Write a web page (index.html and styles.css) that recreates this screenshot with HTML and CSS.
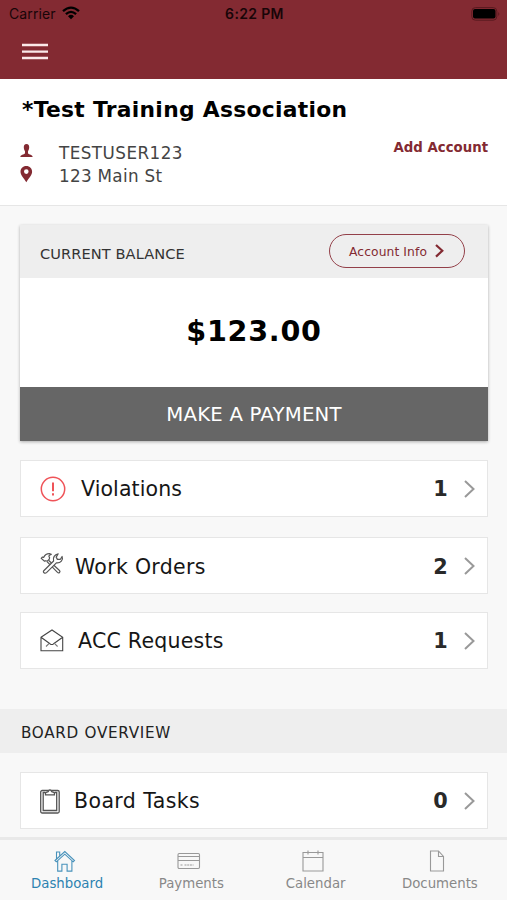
FILE: index.html
```html
<!DOCTYPE html>
<html lang="en">
<head>
<meta charset="utf-8">
<title>Dashboard</title>
<link rel="stylesheet" href="styles.css">
</head>
<body>
<div class="app">
  <header class="top">
    <div class="status">
      <div class="carrier"><span>Carrier</span>
        <svg width="18" height="14" viewBox="0 0 18 14" fill="none" stroke="#000" stroke-width="2.3"><path d="M1 5.2Q9-2 17 5.2M3.9 8.2Q9 3.6 14.1 8.2"/><path d="M6 10.2Q9 7.4 12 10.2L9 13.3z" fill="#000" stroke="none"/></svg>
      </div>
      <span class="time">6:22 PM</span>
      <svg class="battery" width="29" height="14" viewBox="0 0 29 14"><rect x=".8" y=".6" width="25" height="12.6" rx="3.6" fill="none" stroke="#59191f" stroke-width="1"/><rect x="2" y="2" width="22.5" height="9.5" rx="2" fill="#000"/><path d="M27.3 5v4q2-2 0-4z" fill="#59191f"/></svg>
    </div>
    <svg class="burger" width="26" height="17" viewBox="0 0 26 17" stroke="#fbe9e9" stroke-width="2.3"><path d="M0 2h26M0 8.6h26M0 15h26"/></svg>
  </header>

  <section class="account">
    <h1><span class="t-title">*Test Training Association</span></h1>
    <div class="details">
      <div class="who">
        <div class="line"><svg class="i-user" width="13" height="14" viewBox="0 0 13 14" fill="#832a32"><path d="M6.500 0C4.500 0 3.700 1.400 3.800 3.600c.1 2 .7 3 1.200 3.600v2.300C3.800 10.600.5 10.600.3 13h12.400c-.2-2.400-3.500-2.400-4.700-3.500V7.200c.5-.6 1.100-1.600 1.200-3.600C9.300 1.400 8.500 0 6.500 0z"/></svg><span class="t-user">TESTUSER123</span></div>
        <div class="line"><svg class="i-pin" width="13" height="17" viewBox="0 0 13 17" fill="#832a32"><path fill-rule="evenodd" d="M6.300 0C2.800 0 .5 2.500.5 5.700c0 3.300 3.300 6.300 5.800 10.600 2.500-4.300 5.800-7.300 5.800-10.600C12.100 2.500 9.800 0 6.300 0zM6.300 3.300a2.300 2.300 0 1 1 0 4.600 2.300 2.300 0 0 1 0-4.600z"/></svg><span class="t-addr">123 Main St</span></div>
      </div>
      <span class="add t-add">Add Account</span>
    </div>
  </section>

  <main>
    <section class="card">
      <div class="card-head">
        <span class="t-cur">CURRENT BALANCE</span>
        <div class="pill"><span class="t-info">Account Info</span><svg width="9" height="14" viewBox="0 0 9 14" fill="none" stroke="#832a32" stroke-width="2.200"><path d="M1 1l6.300 5.800L1 12.600"/></svg></div>
      </div>
      <div class="amount"><span class="t-amt">$123.00</span></div>
      <div class="pay"><span class="t-pay">MAKE A PAYMENT</span></div>
    </section>

    <div class="row first">
      <svg class="i-alert" width="26" height="26" viewBox="0 0 26 26" fill="none" stroke="#ef5358" stroke-width="1.500"><circle cx="13" cy="13" r="11.700"/><path d="M13 6.500v8.800M13 17.300v2.200" stroke-width="2"/></svg>
      <span class="label t-vio">Violations</span><b>1</b><svg class="chev" width="11" height="18" viewBox="0 0 11 18"><path d="M1 1l8.500 8L1 17"/></svg>
    </div>
    <div class="row work">
      <svg class="i-tools" width="24" height="23" viewBox="0 0 24 23" fill="#fff" stroke="#555" stroke-width="1.200" stroke-linejoin="round"><path d="M8.500 8.300l11 10.200c1.300 1.400-.6 3.200-2 1.900L7 9.700"/><path d="M4.600 9.200L1.200 6.400 2.500 5l1.100.4C4.800 3 6.500 1.500 9.800 1.700l1.500.6C8.800 3 8.300 4.200 9.600 5.700l-.3 1.500-2 2-1.600-.5z"/><path d="M3.800 18.700L13.600 9c-1-3.300 1-6.700 4.600-7.200l-2 3.300 1.200 2.300 3-.1 1.700-2.800c1.400 3.200-1.500 7-5.700 6.400L6.500 20.600c-1.700 1.500-4-.4-2.700-1.900z"/></svg>
      <span class="label t-work">Work Orders</span><b>2</b><svg class="chev" width="11" height="18" viewBox="0 0 11 18"><path d="M1 1l8.500 8L1 17"/></svg>
    </div>
    <div class="row acc">
      <svg class="i-mail" width="24" height="23" viewBox="0 0 24 23" fill="none" stroke="#444" stroke-width="1.100"><path d="M1 8.200L12 1l10.700 7.200v13.500H1zM1 8.200l9 6.600q1.800 1.500 3.600 0l9.100-6.600"/><path d="M6 17.500l3.200-3.200M17.600 17.500l-3.200-3.200" stroke="#777"/></svg>
      <span class="label t-acc">ACC Requests</span><b>1</b><svg class="chev" width="11" height="18" viewBox="0 0 11 18"><path d="M1 1l8.500 8L1 17"/></svg>
    </div>

    <h2><span class="t-board">BOARD OVERVIEW</span></h2>

    <div class="row task">
      <svg class="i-clip" width="20" height="26" viewBox="0 0 20 26" fill="none" stroke="#555" stroke-width="1.300"><rect x=".7" y="2.500" width="18.500" height="22.500" rx="1.500"/><path d="M5 4.500H3.200v18h13.500v-18H15"/><path d="M5.500 6.800V4.600l2.600-.9q1.800-3.800 3.700 0l2.600.9v2.200z" fill="#fff"/></svg>
      <span class="label t-task">Board Tasks</span><b>0</b><svg class="chev" width="11" height="18" viewBox="0 0 11 18"><path d="M1 1l8.500 8L1 17"/></svg>
    </div>
  </main>

  <nav>
    <div class="tab active"><svg width="22" height="22" viewBox="0 0 22 22" fill="none" stroke="#4892bb" stroke-width="1.100"><path d="M1 10.500l9.800-9 9.700 9-1.300 1.300-8.400-7.600-8.500 7.600zM3.700 10.800v10.300h4.200v-6.800h5.200v6.800h4.800V10.800M2.500 8.800V2h3.200v3.700"/></svg><span class="t-dash">Dashboard</span></div>
    <div class="tab"><svg width="24" height="22" viewBox="0 0 24 22" fill="none" stroke="#999" stroke-width="1.100"><rect x="1" y="3.500" width="21.500" height="15" rx="1.200"/><path d="M1 6.500h21.500M1 10.500h21.500"/><path d="M3.500 15h2M7.500 15h9" stroke-dasharray="2 .7"/></svg><span class="t-paym">Payments</span></div>
    <div class="tab"><svg width="22" height="22" viewBox="0 0 22 22" fill="none" stroke="#999" stroke-width="1.100"><path d="M1 2.500h20v18.500H1zM1 7.500h20M6 .5v4M16 .5v4"/></svg><span class="t-cal">Calendar</span></div>
    <div class="tab"><svg width="22" height="22" viewBox="0 0 22 22" fill="none" stroke="#999" stroke-width="1.100"><path d="M4.500 1h8l5 5.500V21h-13zM12.500 1v5.500h5"/></svg><span class="t-doc">Documents</span></div>
  </nav>
</div>
</body>
</html>
```

FILE: styles.css
```css
* { box-sizing: border-box; }
body { margin: 0; font-family: Verdana, "DejaVu Sans", sans-serif; background: #f8f8f8; color: #161616; }
svg { display: block; flex: none; }
span, b { white-space: nowrap; }
.app { width: 507px; height: 900px; display: flex; flex-direction: column; overflow: hidden; }

.top { height: 79px; flex: none; background: #832a32; }
.status { display: grid; grid-template-columns: 1fr auto 1fr; align-items: center; height: 27px; padding: 0 7px 0 9px; font: 14px/27px Inter, sans-serif; color: #180508; }
.carrier { display: flex; align-items: center; gap: 6px; letter-spacing: .1px; }
.carrier svg { margin-top: -2px; }
.time { font-weight: 600; font-size: 14px; letter-spacing: .35px; }
.battery { justify-self: end; }
.burger { margin: 16px 0 0 22px; }

.account { height: 127px; flex: none; background: #fff; border-bottom: 1px solid #e6e6e6; padding: 0 19px 0 20px; }
h1 { margin: 0 0 0 2px; padding-top: 17px; font-size: 21.800px; line-height: 28px; color: #000; letter-spacing: .3px; }
.details { display: flex; justify-content: space-between; padding-top: 17px; }
.line { display: flex; align-items: center; gap: 26px; height: 23px; font-size: 16.800px; color: #444; }
.i-user { margin-top: -3px; }
.i-pin { margin-top: -3px; }
.t-user { letter-spacing: .45px; }
.t-addr { letter-spacing: .3px; }
.add { margin-top: -1px; font-size: 13.300px; line-height: 16px; font-weight: bold; color: #832a32; }

main { flex: none; height: 631px; padding-top: 19px; }
.card { margin: 0 19px 19px 20px; box-shadow: 0 1px 3px rgba(0,0,0,.3); background: #fff; }
.card-head { display: flex; align-items: center; justify-content: space-between; height: 53px; padding: 0 23px 0 20px; background: #eee; font-size: 14.600px; color: #333; }
.card-head > span { margin-top: 4px; }
.t-cur { letter-spacing: .08px; }
.pill { display: flex; align-items: center; gap: 8px; width: 136px; height: 34px; margin-top: -1px; padding-left: 19px; border: 1.500px solid #934049; border-radius: 17px; font-size: 12.300px; color: #832a32; letter-spacing: .1px; }
.t-info { margin-top: 1px; }
.amount { height: 109px; text-align: center; font-size: 28.600px; line-height: 107px; font-weight: bold; color: #000; letter-spacing: .75px; }
.pay { height: 54px; background: #666; color: #fff; text-align: center; font-size: 19.700px; line-height: 55px; letter-spacing: .2px; }

.row { display: flex; align-items: center; height: 57px; margin: 0 19px 20px 20px; padding: 0 12px 0 20px; background: #fff; border: 1px solid #e6e6e6; font-size: 20.500px; }
.work { margin-bottom: 18px; }
.row .label { margin-right: auto; }
.row b { width: 15px; display: flex; justify-content: center; font-size: 20.800px; color: #292929; }
.t-vio { letter-spacing: .1px; }
.t-work { letter-spacing: .3px; margin-top: 2px; }
.t-work + b { margin-top: 2px; }
.t-acc { letter-spacing: .25px; }
.t-task { letter-spacing: .4px; }
.chev { margin-left: 16px; fill: none; stroke: #999; stroke-width: 2; }
.i-alert { margin-left: -1px; margin-right: 15px; }
.i-tools { margin-left: -1px; margin-right: 11px; margin-top: -5px; }
.i-mail { margin-left: -1px; margin-right: 14px; }
.i-clip { margin-left: -1px; margin-right: 14px; }
h2 { height: 44px; margin: 40px 0 19px; padding-left: 20px; background: #eee; font-size: 15.200px; font-weight: normal; line-height: 49px; color: #222; letter-spacing: .7px; }
.t-board { margin-left: 1px; }

nav { display: flex; flex: none; height: 63px; border-top: 3px solid #e9e9e9; padding: 10px 5px 0; background: #f8f8f8; }
.tab { width: 124.250px; display: flex; flex-direction: column; align-items: center; font-size: 13.300px; line-height: 16px; color: #888; gap: 4px; }
.tab svg { margin-left: -5px; }
.tab:last-child svg, .tab:nth-child(1) svg { margin-left: -5px; }
.active { color: #2d83b1; }
```
